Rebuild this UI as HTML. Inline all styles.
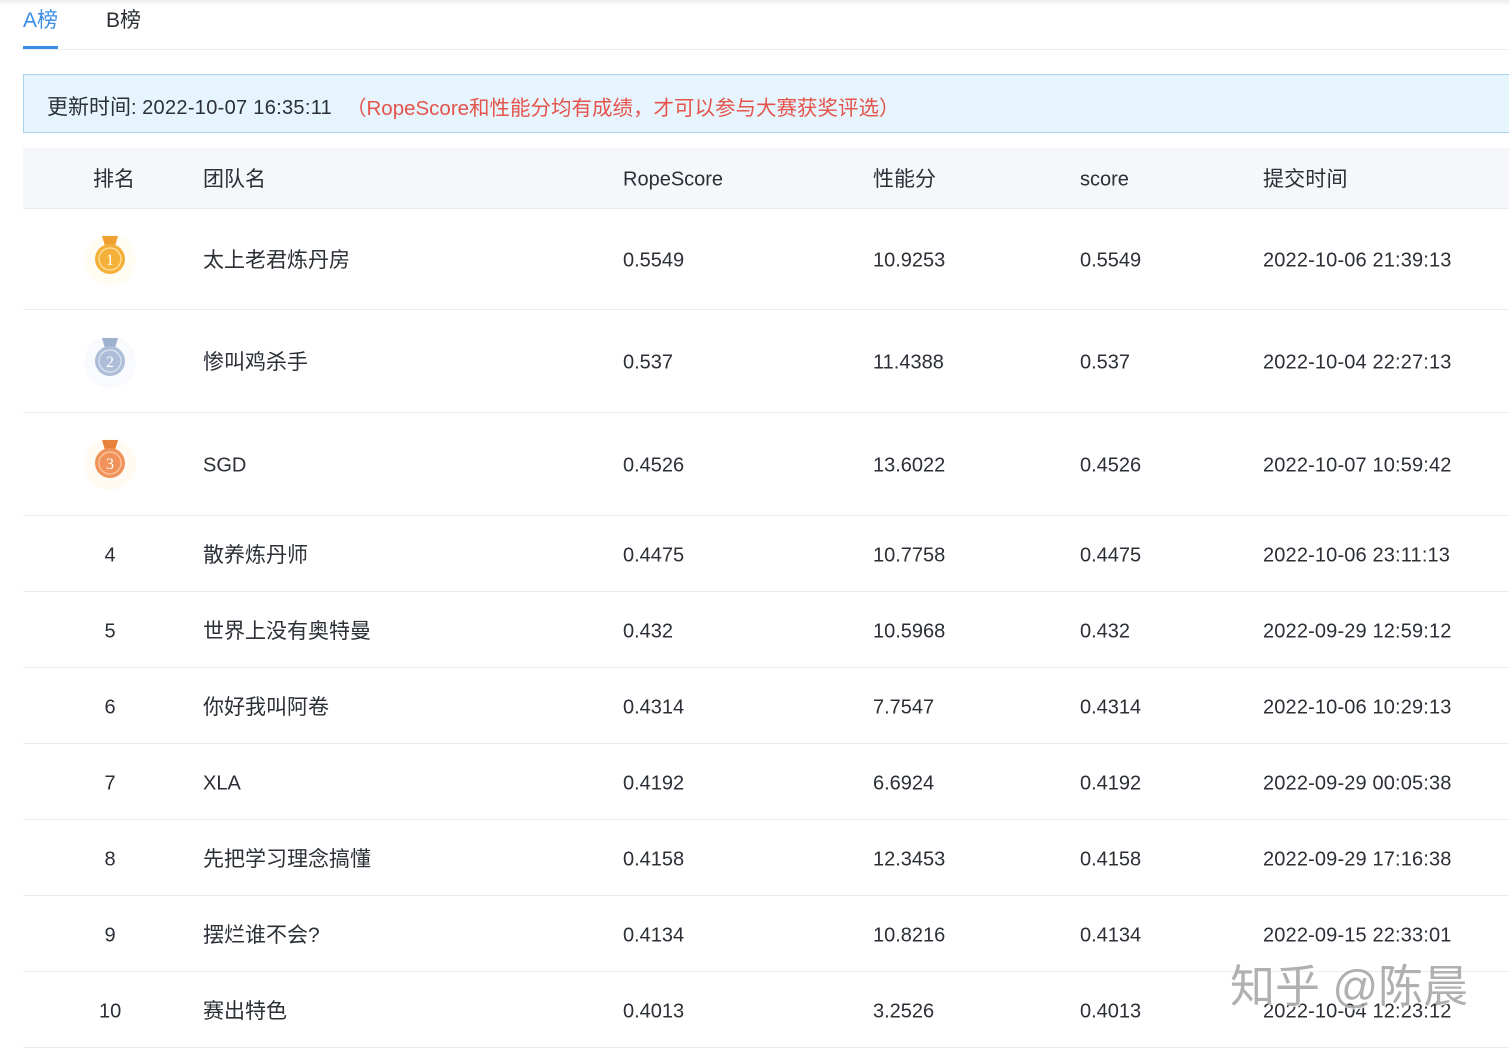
<!DOCTYPE html>
<html><head><meta charset="utf-8"><style>
body{margin:0;width:1509px;height:1048px;background:#fff;position:relative;overflow:hidden;font-family:"Liberation Sans","Noto Sans CJK SC",sans-serif;color:#2b2f36;font-size:20px}
.a{position:absolute;white-space:nowrap}
.z{font-size:21px}
.row{position:absolute;left:23px;right:0;border-bottom:1px solid #e8ebef}
.row span{position:absolute;top:calc(50% + 2px);transform:translateY(-50%);white-space:nowrap}
.row span.z{top:50%}
.c1{left:76px;width:22px;text-align:center}.c2{left:180px}.c3{left:600px}.c4{left:850px}.c5{left:1057px}.c6{left:1240px;letter-spacing:.15px}
</style></head><body>
<div class="a" style="left:0;right:0;top:0;height:6px;background:linear-gradient(#eee,#fff)"></div>
<div class="a z" style="left:23px;top:4px;color:#3a8ee6">A榜</div>
<div class="a z" style="left:106px;top:4px">B榜</div>
<div class="a" style="left:23px;top:46px;width:35px;height:3px;background:#3a8ee6"></div>
<div class="a" style="left:23px;right:0;top:49px;height:1px;background:#eceef2"></div>
<div class="a" style="left:23px;right:0;top:74px;height:57px;background:#e6f5fd;border:1px solid #a9d4ea;border-right:none"></div>
<div class="a" style="left:47px;top:91px"><span class="z">更新时间</span>: <span style="letter-spacing:.3px">2022-10-07 16:35:11</span></div>
<div class="a" style="left:346px;top:91px;color:#e5534b;font-size:20.5px">（RopeScore和性能分均有成绩，才可以参与大赛获奖评选）</div>
<div class="row" style="top:148px;height:60px;background:#f5f7fa"><span class="z" style="left:70px">排名</span><span class="c2 z">团队名</span><span class="c3">RopeScore</span><span class="c4 z">性能分</span><span class="c5">score</span><span class="c6 z">提交时间</span></div>
<svg class="a" style="left:80px;top:230px" width="60" height="60" viewBox="0 0 60 60"><circle cx="30" cy="30" r="26" fill="#fffaeb" opacity=".6"/><path d="M22 6h16l-3 10h-10z" fill="#f0a030"/><circle cx="30" cy="29" r="15" fill="#f5b03a"/><circle cx="30" cy="29" r="11" fill="none" stroke="#fde3a6" stroke-width="1.2"/><text x="30" y="35" font-size="16" fill="#fff" text-anchor="middle" font-family="Liberation Serif">1</text></svg>
<svg class="a" style="left:80px;top:332px" width="60" height="60" viewBox="0 0 60 60"><circle cx="30" cy="30" r="26" fill="#f5f8fc" opacity=".7"/><path d="M22 6h16l-3 10h-10z" fill="#9fb1cf"/><circle cx="30" cy="29" r="15" fill="#aebdd8"/><circle cx="30" cy="29" r="11" fill="none" stroke="#dfe6f2" stroke-width="1.2"/><text x="30" y="35" font-size="16" fill="#fff" text-anchor="middle" font-family="Liberation Serif">2</text></svg>
<svg class="a" style="left:80px;top:434px" width="60" height="60" viewBox="0 0 60 60"><circle cx="30" cy="30" r="26" fill="#fff8ec" opacity=".7"/><path d="M22 6h16l-3 10h-10z" fill="#e8823a"/><circle cx="30" cy="29" r="15" fill="#f0925a"/><circle cx="30" cy="29" r="11" fill="none" stroke="#fbc9a6" stroke-width="1.2"/><text x="30" y="35" font-size="16" fill="#fff" text-anchor="middle" font-family="Liberation Serif">3</text></svg>
<div class="row" style="top:208px;height:101px"><span class="c2 z">太上老君炼丹房</span><span class="c3">0.5549</span><span class="c4">10.9253</span><span class="c5">0.5549</span><span class="c6">2022-10-06 21:39:13</span></div>
<div class="row" style="top:310px;height:102px"><span class="c2 z">惨叫鸡杀手</span><span class="c3">0.537</span><span class="c4">11.4388</span><span class="c5">0.537</span><span class="c6">2022-10-04 22:27:13</span></div>
<div class="row" style="top:413px;height:102px"><span class="c2">SGD</span><span class="c3">0.4526</span><span class="c4">13.6022</span><span class="c5">0.4526</span><span class="c6">2022-10-07 10:59:42</span></div>
<div class="row" style="top:516px;height:75px"><span class="c1">4</span><span class="c2 z">散养炼丹师</span><span class="c3">0.4475</span><span class="c4">10.7758</span><span class="c5">0.4475</span><span class="c6">2022-10-06 23:11:13</span></div>
<div class="row" style="top:592px;height:75px"><span class="c1">5</span><span class="c2 z">世界上没有奥特曼</span><span class="c3">0.432</span><span class="c4">10.5968</span><span class="c5">0.432</span><span class="c6">2022-09-29 12:59:12</span></div>
<div class="row" style="top:668px;height:75px"><span class="c1">6</span><span class="c2 z">你好我叫阿卷</span><span class="c3">0.4314</span><span class="c4">7.7547</span><span class="c5">0.4314</span><span class="c6">2022-10-06 10:29:13</span></div>
<div class="row" style="top:744px;height:75px"><span class="c1">7</span><span class="c2">XLA</span><span class="c3">0.4192</span><span class="c4">6.6924</span><span class="c5">0.4192</span><span class="c6">2022-09-29 00:05:38</span></div>
<div class="row" style="top:820px;height:75px"><span class="c1">8</span><span class="c2 z">先把学习理念搞懂</span><span class="c3">0.4158</span><span class="c4">12.3453</span><span class="c5">0.4158</span><span class="c6">2022-09-29 17:16:38</span></div>
<div class="row" style="top:896px;height:75px"><span class="c1">9</span><span class="c2 z">摆烂谁不会?</span><span class="c3">0.4134</span><span class="c4">10.8216</span><span class="c5">0.4134</span><span class="c6">2022-09-15 22:33:01</span></div>
<div class="row" style="top:972px;height:75px"><span class="c1">10</span><span class="c2 z">赛出特色</span><span class="c3">0.4013</span><span class="c4">3.2526</span><span class="c5">0.4013</span><span class="c6">2022-10-04 12:23:12</span></div>
<div class="a" style="left:1230px;top:950px;font-size:45px;color:rgba(150,150,150,.75);text-shadow:1px 1px 0 rgba(255,255,255,.8)">知乎 @陈晨</div>
</body></html>
